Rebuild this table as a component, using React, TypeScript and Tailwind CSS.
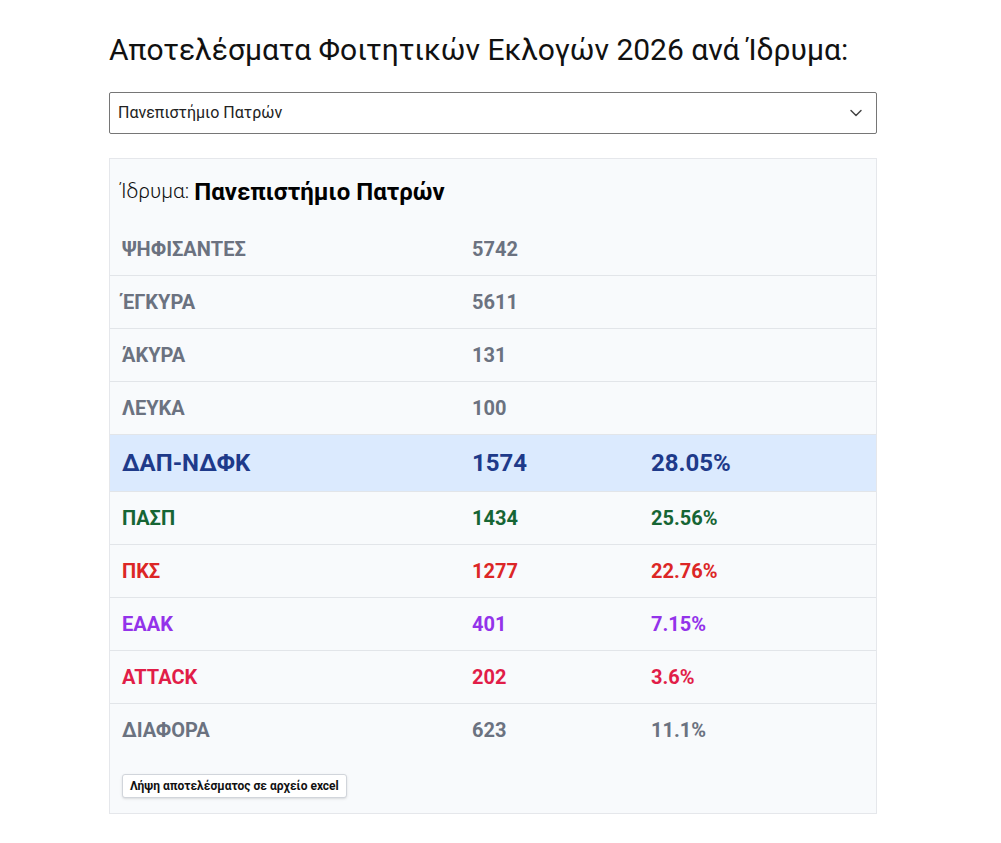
import { ChevronDown } from "lucide-react";

type Row = {
  label: string;
  votes: number;
  pct?: string;
  color: string;
  big?: boolean;
};

const rows: Row[] = [
  { label: "ΨΗΦΙΣΑΝΤΕΣ", votes: 5742, color: "text-[#6b7280]" },
  { label: "ΈΓΚΥΡΑ", votes: 5611, color: "text-[#6b7280]" },
  { label: "ΆΚΥΡΑ", votes: 131, color: "text-[#6b7280]" },
  { label: "ΛΕΥΚΑ", votes: 100, color: "text-[#6b7280]" },
  { label: "ΔΑΠ-ΝΔΦΚ", votes: 1574, pct: "28.05%", color: "text-[#1e3a8a]", big: true },
  { label: "ΠΑΣΠ", votes: 1434, pct: "25.56%", color: "text-[#166534]" },
  { label: "ΠΚΣ", votes: 1277, pct: "22.76%", color: "text-[#dc2626]" },
  { label: "ΕΑΑΚ", votes: 401, pct: "7.15%", color: "text-[#9333ea]" },
  { label: "ATTACK", votes: 202, pct: "3.6%", color: "text-[#e11d48]" },
  { label: "ΔΙΑΦΟΡΑ", votes: 623, pct: "11.1%", color: "text-[#6b7280]" },
];

export default function App() {
  return (
    <div className="min-h-[843px] bg-white font-['Roboto',sans-serif] text-black">
      <div className="ml-[109px] w-[768px] pt-[30px]">
        <h1 className="text-[30px] leading-[40px] font-normal text-[#111]">
          Αποτελέσματα Φοιτητικών Εκλογών 2026 ανά Ίδρυμα:
        </h1>

        <div className="mt-[22px] flex h-[42px] items-center justify-between border border-[#767676] rounded-[2px] pl-[8px] pr-[10px] text-[16px] text-[#222]">
          <span>Πανεπιστήμιο Πατρών</span>
          <ChevronDown className="h-5 w-5 text-[#444]" strokeWidth={1.75} />
        </div>

        <div className="mt-[24px] border border-[#e5e7eb] bg-[#f8fafc]">
          <div className="flex h-[63px] items-center px-[10px] pt-[2px]">
            <span className="text-[21px] font-light text-[#111]">Ίδρυμα:&nbsp;</span>
            <span className="text-[24px] font-bold text-black">Πανεπιστήμιο Πατρών</span>
          </div>

          {rows.map((r, i) => (
            <div
              key={r.label}
              className={
                "grid grid-cols-[362px_179px_1fr] items-center font-bold " +
                (i > 0 ? "border-t border-[#e2e5e9] " : "") +
                (r.big ? "h-[57px] bg-[#dbeafe] text-[24px] " : "h-[53px] text-[20px] ") +
                r.color
              }
            >
              <div className="pl-[12px]">{r.label}</div>
              <div>{r.votes}</div>
              <div>{r.pct ?? ""}</div>
            </div>
          ))}

          <div className="px-[12px] pt-[17px] pb-[15px]">
            <button className="h-[24px] rounded-[3px] border border-[#d1d5db] bg-white px-[7px] text-[12px] font-bold text-[#111] shadow-sm">
              Λήψη αποτελέσματος σε αρχείο excel
            </button>
          </div>
        </div>
      </div>
    </div>
  );
}
